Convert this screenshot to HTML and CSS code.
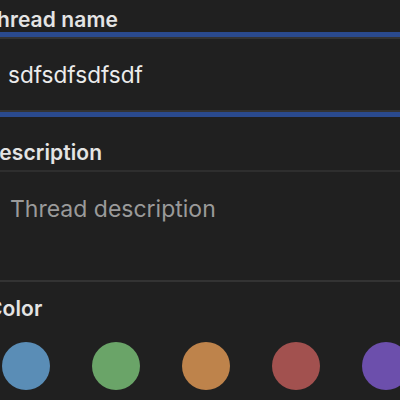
FILE: index.html
```html
<!DOCTYPE html>
<html>
<head>
<meta charset="utf-8">
<link rel="stylesheet" href="styles.css">
</head>
<body>
<div class="form">
  <div class="label label-first">Thread name</div>
  <div class="input input-focused">sdfsdfsdfsdf</div>
  <div class="label label-desc">Description</div>
  <div class="textarea"><span class="placeholder">Thread description</span></div>
  <div class="label label-color">Color</div>
  <div class="swatches">
    <span class="swatch swatch-blue"></span>
    <span class="swatch swatch-green"></span>
    <span class="swatch swatch-orange"></span>
    <span class="swatch swatch-red"></span>
    <span class="swatch swatch-purple"></span>
  </div>
</div>
</body>
</html>
```
FILE: styles.css
```css
html, body {
  margin: 0;
  padding: 0;
  background: #202020;
  overflow: hidden;
  height: 400px;
}
.form {
  margin-left: -11px;
  width: 440px;
  font-family: Inter, "Noto Sans", sans-serif;
}
.label {
  font-size: 21px;
  font-weight: 600;
  line-height: 24px;
  color: #e4e4e4;
  letter-spacing: 0.1px;
  margin-left: -6px;
}
.label-first { padding-top: 8px; }
.label-desc { margin-top: 29px; margin-left: -5px; }
.label-color { margin-top: 15px; margin-left: -2px; }
.input {
  margin-top: 5px;
  border-top: 2px solid #333333;
  border-bottom: 2px solid #333333;
  height: 71px;
  line-height: 71px;
  font-size: 22.6px;
  color: #ececec;
  padding-left: 19px;
}
.input-focused {
  outline: 5px solid #2a4a8e;
}
.textarea {
  margin-top: 5px;
  border-top: 2px solid #2e2e2e;
  border-bottom: 2px solid #333333;
  height: 86px;
  padding-top: 22px;
  padding-left: 21px;
  font-size: 23px;
  line-height: 30px;
}
.placeholder { color: #9a9a9a; }
.swatches {
  display: flex;
  gap: 42px;
  margin-top: 21px;
  padding-left: 13px;
}
.swatch {
  width: 48px;
  height: 48px;
  border-radius: 50%;
  flex: none;
}
.swatch-blue { background: #5a8db6; }
.swatch-green { background: #6aa468; }
.swatch-orange { background: #be834b; }
.swatch-red { background: #a2514f; }
.swatch-purple { background: #6c4fac; }
```
